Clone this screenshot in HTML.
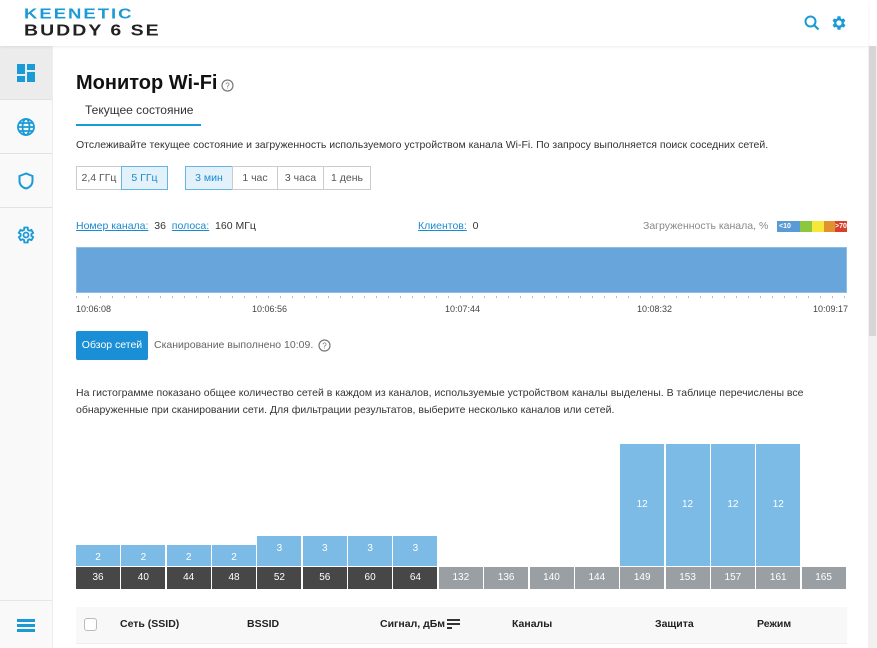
<!DOCTYPE html>
<html><head><meta charset="utf-8"><style>
*{box-sizing:border-box;margin:0;padding:0}
body{width:877px;height:648px;overflow:hidden;background:#fff;font-family:"Liberation Sans",sans-serif;position:relative;color:#222}
.abs{position:absolute}
.hdr{left:0;top:0;width:868px;height:46px;background:#fff;box-shadow:0 1px 3px rgba(0,0,0,.08);z-index:2}
.logo1{left:24px;top:5px;font-size:18.5px;font-weight:bold;color:#1a9ad6;letter-spacing:2px;transform:scaleY(.8);transform-origin:left top}
.logo2{left:24px;top:22px;font-size:19.5px;font-weight:bold;color:#222;letter-spacing:2px;transform:scaleY(.8);transform-origin:left top}
.side{left:0;top:46px;width:53px;height:602px;background:#f9f9f9;border-right:1px solid #eee}
.sitem{left:0;width:52px;height:54px;border-bottom:1px solid #e2e2e2}
.sitem svg{position:absolute;left:17px;top:18px}
.btn{position:absolute;top:166px;height:24px;border:1px solid #ccc;font-size:10.5px;color:#555;text-align:center;line-height:22px;background:#fff}
.sel{background:#e3f1fb;border-color:#64b4e6;color:#1a8ad0}
.small{font-size:10.5px;color:#333}
.lnk{color:#1a8ad0;text-decoration:underline}
.col{position:absolute;width:44px;color:#fff;font-size:10px;text-align:center}
.th{position:absolute;top:618px;font-size:10.5px;font-weight:bold;color:#222}
</style></head><body>
<div class="abs hdr">
<div class="abs logo1">KEENETIC</div>
<div class="abs logo2">BUDDY 6 SE</div>
<svg class="abs" style="left:804px;top:15px" width="16" height="16" viewBox="0 0 16 16"><circle cx="6.5" cy="6.5" r="5" fill="none" stroke="#1a9ad6" stroke-width="2"/><path d="M10 10l4.5 4.5" stroke="#1a9ad6" stroke-width="2.2"/></svg>
<svg class="abs" style="left:830px;top:14px" width="18" height="18" viewBox="0 0 24 24"><path fill="#1a9ad6" fill-rule="evenodd" d="M19.4 13a7.5 7.5 0 000-2l2.1-1.6-2-3.5-2.5 1a7 7 0 00-1.7-1L15 3h-4l-.4 2.9a7 7 0 00-1.7 1l-2.5-1-2 3.5L6.6 11a7.5 7.5 0 000 2l-2.1 1.6 2 3.5 2.5-1a7 7 0 001.7 1L11 21h4l.4-2.9a7 7 0 001.7-1l2.5 1 2-3.5zM13 15.5a3.5 3.5 0 110-7 3.5 3.5 0 010 7z" transform="translate(-1 0)"/></svg>
</div>
<div class="abs side">
<div class="abs sitem" style="top:0;background:#ececec"><svg width="18" height="18" viewBox="0 0 18 18" fill="#1a9ad6"><rect x="0" y="0" width="8" height="10"/><rect x="10" y="0" width="8" height="6"/><rect x="0" y="12" width="8" height="6"/><rect x="10" y="8" width="8" height="10"/></svg></div>
<div class="abs sitem" style="top:54px"><svg width="18" height="18" viewBox="0 0 18 18" fill="none" stroke="#1a9ad6" stroke-width="1.8"><circle cx="9" cy="9" r="8"/><ellipse cx="9" cy="9" rx="3.5" ry="8"/><path d="M1 9h16M2.5 5h13M2.5 13h13"/></svg></div>
<div class="abs sitem" style="top:108px"><svg width="18" height="18" viewBox="0 0 18 18" fill="none" stroke="#1a9ad6" stroke-width="2"><path d="M9 1.5L2.5 4v5c0 4 3 6.5 6.5 7.5 3.5-1 6.5-3.5 6.5-7.5V4z"/></svg></div>
<div class="abs sitem" style="top:162px;border:none"><svg width="20" height="20" viewBox="0 0 24 24" style="left:16px;top:17px"><path fill="none" stroke="#1a9ad6" stroke-width="2.2" d="M19.4 13a7.5 7.5 0 000-2l2.1-1.6-2-3.5-2.5 1a7 7 0 00-1.7-1L15 3h-4l-.4 2.9a7 7 0 00-1.7 1l-2.5-1-2 3.5L6.6 11a7.5 7.5 0 000 2l-2.1 1.6 2 3.5 2.5-1a7 7 0 001.7 1L11 21h4l.4-2.9a7 7 0 001.7-1l2.5 1 2-3.5z" transform="translate(-1 0)"/><circle cx="12" cy="12" r="3" fill="none" stroke="#1a9ad6" stroke-width="2.2"/></svg></div>
<div class="abs" style="left:0;top:554px;width:52px;height:48px;border-top:1px solid #e6e6e6"><div class="abs" style="left:17px;top:18px;width:18px;height:3px;background:#1a9ad6;box-shadow:0 5px 0 #1a9ad6,0 10px 0 #1a9ad6"></div></div>
</div>
<div class="abs" style="left:868px;top:46px;width:9px;height:602px;background:#f1f1f1"></div>
<div class="abs" style="left:869px;top:46px;width:7px;height:290px;background:#d6d6d6"></div>

<div class="abs" style="left:76px;top:72px;font-size:20px;font-weight:bold;color:#111">Монитор Wi-Fi</div>
<svg class="abs" style="left:221px;top:79px" width="13" height="13" viewBox="0 0 13 13"><circle cx="6.5" cy="6.5" r="5.5" fill="none" stroke="#777" stroke-width="1.2"/><text x="6.5" y="9.5" font-size="8" text-anchor="middle" fill="#777" font-family="Liberation Sans">?</text></svg>
<div class="abs" style="left:85px;top:103px;font-size:12px;color:#333">Текущее состояние</div>
<div class="abs" style="left:76px;top:124px;width:125px;height:2px;background:#1a9ad6"></div>
<div class="abs small" style="left:76px;top:139px">Отслеживайте текущее состояние и загруженность используемого устройством канала Wi-Fi. По запросу выполняется поиск соседних сетей.</div>
<div class="btn" style="left:76px;width:46px">2,4 ГГц</div>
<div class="btn sel" style="left:121px;width:47px">5 ГГц</div>
<div class="btn sel" style="left:185px;width:48px">3 мин</div>
<div class="btn" style="left:232px;width:46px">1 час</div>
<div class="btn" style="left:277px;width:47px">3 часа</div>
<div class="btn" style="left:323px;width:48px">1 день</div>

<div class="abs small" style="left:76px;top:220px"><span class="lnk">Номер канала:</span>&nbsp; 36 &nbsp;<span class="lnk">полоса:</span>&nbsp; 160 МГц</div>
<div class="abs small" style="left:418px;top:220px"><span class="lnk">Клиентов:</span>&nbsp; 0</div>
<div class="abs small" style="left:643px;top:220px;color:#888">Загруженность канала, %</div>
<div class="abs" style="left:777px;top:221px;width:70px;height:11px;display:flex;font-size:7px;font-weight:bold;color:#fff;line-height:11px">
<div style="width:23px;background:#5b9bd5;padding-left:2px">&lt;10</div><div style="width:12px;background:#8dc63f"></div><div style="width:12px;background:#f5e83a"></div><div style="width:11px;background:#e0922f"></div><div style="width:12px;background:#d9402b">&gt;70</div></div>
<div class="abs" style="left:76px;top:247px;width:771px;height:46px;background:#67a5da;border:1px solid #8dbde6"></div>
<div class="abs" style="left:76px;top:296px;width:771px;height:2px;background:repeating-linear-gradient(90deg,#bbb 0 1px,transparent 1px 12px)"></div>
<div class="abs" style="left:76px;top:304px;font-size:9px;color:#444">10:06:08</div>
<div class="abs" style="left:252px;top:304px;font-size:9px;color:#444">10:06:56</div>
<div class="abs" style="left:445px;top:304px;font-size:9px;color:#444">10:07:44</div>
<div class="abs" style="left:637px;top:304px;font-size:9px;color:#444">10:08:32</div>
<div class="abs" style="left:813px;top:304px;font-size:9px;color:#444">10:09:17</div>

<div class="abs" style="left:76px;top:331px;width:72px;height:29px;background:#1a8fd6;border-radius:2px;color:#fff;font-size:10.5px;line-height:29px;text-align:center">Обзор сетей</div>
<div class="abs small" style="left:154px;top:339px;color:#666">Сканирование выполнено 10:09.</div>
<svg class="abs" style="left:318px;top:339px" width="13" height="13" viewBox="0 0 13 13"><circle cx="6.5" cy="6.5" r="5.5" fill="none" stroke="#777" stroke-width="1.2"/><text x="6.5" y="9.5" font-size="8" text-anchor="middle" fill="#777" font-family="Liberation Sans">?</text></svg>

<div class="abs small" style="left:76px;top:385px;line-height:17px;width:760px">На гистограмме показано общее количество сетей в каждом из каналов, используемые устройством каналы выделены. В таблице перечислены все обнаруженные при сканировании сети. Для фильтрации результатов, выберите несколько каналов или сетей.</div>

<div id="bars"></div>
<div class="abs" style="left:76px;top:607px;width:771px;height:36px;background:#f8f8f8"></div>
<div class="abs" style="left:84px;top:618px;width:13px;height:13px;border:1px solid #bbb;border-radius:3px;background:#fff"></div>
<div class="th" style="left:120px">Сеть (SSID)</div>
<div class="th" style="left:247px">BSSID</div>
<div class="th" style="left:380px">Сигнал, дБм</div>
<div class="abs" style="left:447px;top:619px;width:13px;height:2px;background:#333;box-shadow:0 4px 0 #333"></div><div class="abs" style="left:447px;top:627px;width:5px;height:2px;background:#333"></div>
<div class="th" style="left:512px">Каналы</div>
<div class="th" style="left:655px">Защита</div>
<div class="th" style="left:757px">Режим</div>
<div class="abs" style="left:76px;top:643px;width:771px;height:1px;background:#eee"></div>
<script>
var ch=[36,40,44,48,52,56,60,64,132,136,140,144,149,153,157,161,165],
v=[2,2,2,2,3,3,3,3,0,0,0,0,12,12,12,12,0],
h={2:21,3:30,12:122},s='';
for(var i=0;i<17;i++){var x=76+i*45.35,own=i<8;
s+='<div class="col" style="left:'+x+'px;top:567px;height:22px;line-height:22px;background:'+(own?'#474747':'#9a9fa3')+'">'+ch[i]+'</div>';
if(v[i]){var hh=h[v[i]];s+='<div class="col" style="left:'+x+'px;top:'+(566-hh)+'px;height:'+hh+'px;line-height:'+(v[i]==12?hh:v[i]==2?17:hh-4)+'px;background:#7bbbe6;padding-top:'+(v[i]==2?4:0)+'px">'+v[i]+'</div>';}}
document.getElementById('bars').innerHTML=s;
</script>
</body></html>
